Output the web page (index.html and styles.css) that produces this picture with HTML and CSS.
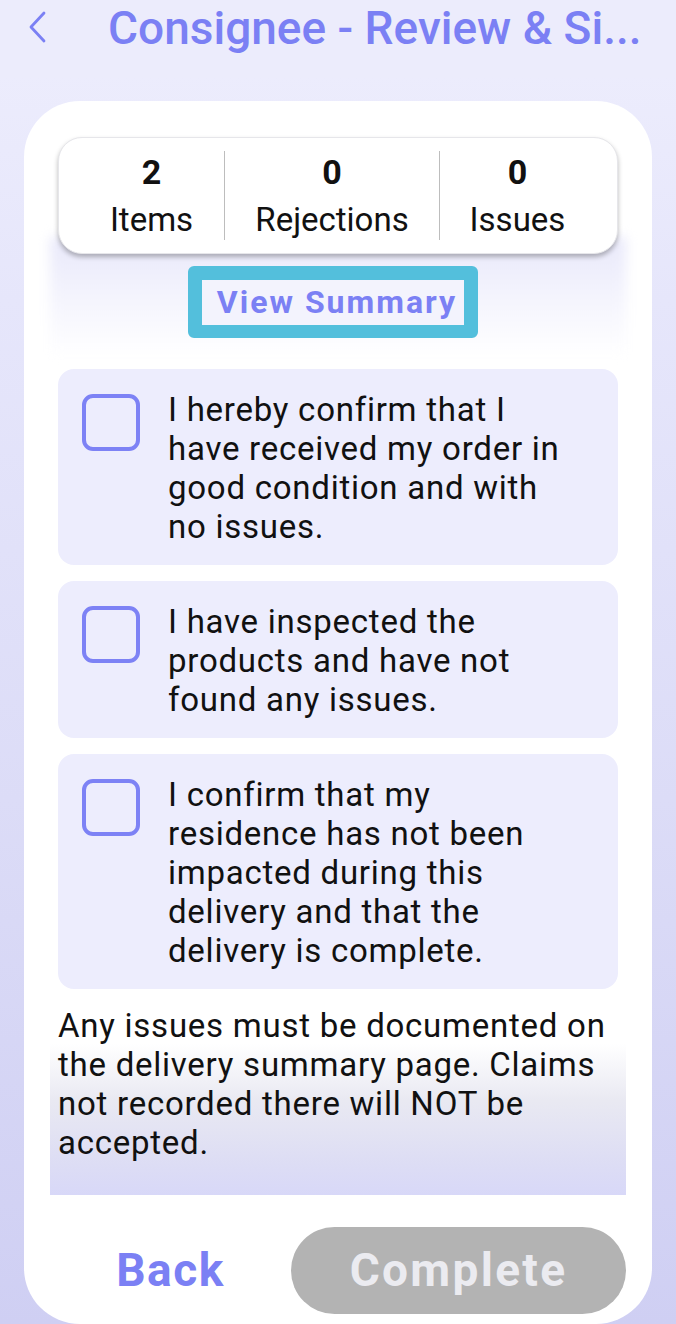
FILE: index.html
```html
<!DOCTYPE html>
<html>
<head>
<meta charset="utf-8">
<link rel="stylesheet" href="styles.css">
</head>
<body>
<div class="screen">
  <header class="topbar">
    <svg class="back-icon" width="22" height="32" viewBox="0 0 22 32"><path d="M18 2 L5 16 L18 30" fill="none" stroke="#7b80f4" stroke-width="2.8" stroke-linecap="round" stroke-linejoin="round"/></svg>
    <h1 class="title">Consignee - Review &amp; Si...</h1>
  </header>
  <main class="card">
    <section class="summary-area">
      <div class="stats">
        <div class="stat stat-items"><div class="num">2</div><div class="label">Items</div></div>
        <div class="divider"></div>
        <div class="stat stat-rej"><div class="num">0</div><div class="label">Rejections</div></div>
        <div class="divider"></div>
        <div class="stat stat-iss"><div class="num">0</div><div class="label">Issues</div></div>
      </div>
      <div class="view-wrap"><button class="view-btn"><span>View Summary</span></button></div>
    </section>
    <div class="confirm">
      <span class="box"></span>
      <p>I hereby confirm that I have received my order in good condition and with no issues.</p>
    </div>
    <div class="confirm">
      <span class="box"></span>
      <p>I have inspected the products and have not found any issues.</p>
    </div>
    <div class="confirm">
      <span class="box"></span>
      <p>I confirm that my residence has not been impacted during this delivery and that the delivery is complete.</p>
    </div>
    <div class="note">
      <p>Any issues must be documented on the delivery summary page. Claims not recorded there will NOT be accepted.</p>
    </div>
    <div class="actions">
      <button class="back-btn">Back</button>
      <button class="complete-btn">Complete</button>
    </div>
  </main>
</div>
</body>
</html>
```
FILE: styles.css
```css
* { box-sizing: border-box; }
html, body { margin: 0; padding: 0; }
body {
  font-family: Roboto, "Noto Sans", sans-serif;
  background: linear-gradient(to bottom, #eeeefd 0, #e6e6fb 300px, #dcdcf7 800px, #cfcff3 100%);
  height: 1324px;
  overflow: hidden;
}
.screen { height: 1324px; display: flex; flex-direction: column; }
.topbar {
  height: 80px;
  display: flex;
  align-items: center;
  padding-left: 26px;
  background: #ececfc;
}
.back-icon { flex: none; margin-top: -24px; }
.title {
  margin: 0 0 0 60px;
  font-size: 46px;
  font-weight: 500;
  color: #7b80f4;
  white-space: nowrap;
  line-height: 1;
  margin-top: -22px;
}
.card {
  margin: 23px 24px 0;
  background: #fff;
  border-radius: 56px;
  padding: 36px 34px 0;
  height: 1260px;
  display: flex;
  flex-direction: column;
}
.summary-area {
  position: relative;
}
.summary-area::before {
  content: "";
  position: absolute;
  left: -8px; right: -8px;
  top: 100px; height: 120px;
  background: linear-gradient(to bottom, #e8e8fa 0, #f4f4fd 50%, #ffffff 100%);
  filter: blur(6px);
  z-index: 0;
}
.stats {
  position: relative;
  z-index: 1;
  height: 117px;
  background: #fff;
  border: 1px solid #e6e6ea;
  border-radius: 24px;
  box-shadow: 0 3px 5px rgba(0,0,0,0.28);
  display: grid;
  grid-template-columns: 145px 1px 214px 1px 1fr;
  padding: 0 20px;
  align-items: center;
}
.divider { width: 1px; height: 89px; background: #bdbdbd; }
.stat { text-align: center; color: #111; }
.stat-iss { padding-right: 2px; }
.num { font-size: 34px; font-weight: 700; line-height: 40px; margin-top: 2px; }
.label { font-size: 33px; line-height: 40px; margin-top: 8px; }
.view-wrap {
  position: relative;
  z-index: 1;
  display: flex;
  justify-content: center;
  padding: 12px 0 31px;
}
.view-btn {
  margin-left: -10px;
  width: 290px;
  height: 72px;
  border: 14px solid #53bfdc;
  border-bottom-width: 13px;
  border-radius: 6px;
  background: #f3f3fd;
  padding: 0 0 0 8px;
  font-family: inherit;
  font-size: 32px;
  font-weight: 700;
  letter-spacing: 2px;
  color: #7b80f4;
  display: flex;
  align-items: center;
  justify-content: center;
}
.confirm {
  display: flex;
  align-items: flex-start;
  background: #ededfd;
  border-radius: 16px;
  padding: 21px 40px 19px 24px;
  margin-bottom: 16px;
}
.box {
  flex: none;
  width: 58px;
  height: 57px;
  border: 4.5px solid #7d82f5;
  border-radius: 11px;
  margin-top: 4px;
  margin-right: 28px;
}
.confirm p, .note p {
  margin: 0;
  font-size: 33px;
  line-height: 39px;
  color: #111;
  letter-spacing: 0.75px;
}
.confirm p { width: 404px; }
.note {
  margin: 1px -8px 0;
  padding: 0 8px 33px;
  background: linear-gradient(to bottom, #ffffff 0, #ffffff 20%, #e9e9f2 50%, #dedef4 80%, #d8d8f8 100%);
}
.actions {
  margin: 32px -8px 0;
  display: flex;
  align-items: center;
}
.back-btn {
  width: 241px;
  height: 87px;
  background: none;
  border: none;
  font-family: inherit;
  font-size: 46px;
  font-weight: 700;
  letter-spacing: 1.5px;
  color: #7b80f4;
  padding: 0;
}
.complete-btn {
  flex: 1;
  height: 87px;
  border: none;
  border-radius: 44px;
  background: #b3b3b3;
  color: #ebebf0;
  font-family: inherit;
  font-size: 46px;
  font-weight: 700;
  letter-spacing: 2.3px;
  padding: 0;
}
```
